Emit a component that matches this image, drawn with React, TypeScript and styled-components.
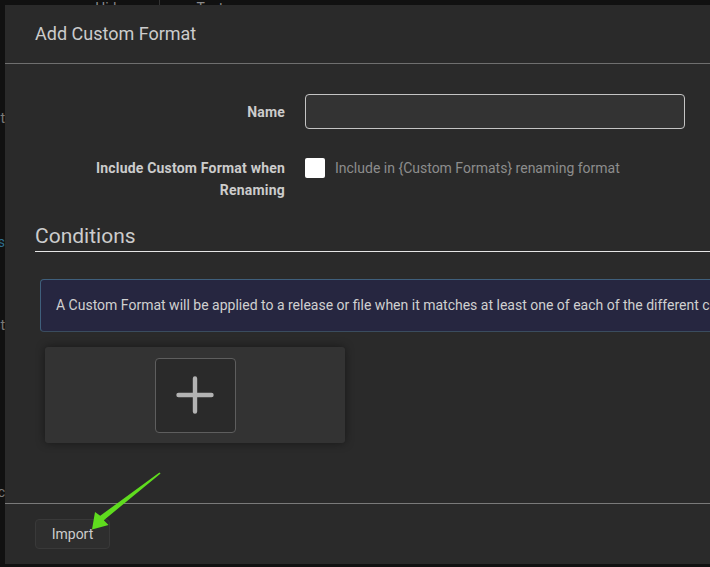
import React from "react";
import styled, { createGlobalStyle } from "styled-components";

const Global = createGlobalStyle`
  html, body { margin: 0; padding: 0; background: #111111; overflow: hidden; }
  body { font-family: Roboto, "Liberation Sans", sans-serif; }
  * { box-sizing: border-box; }
`;

const Page = styled.div`
  position: relative;
  width: 710px;
  height: 567px;
  overflow: hidden;
  background: #111111;
`;

const TopStrip = styled.div`
  display: flex;
  height: 5px;
  overflow: hidden;
  padding-left: 60px;
`;

const TopCell = styled.div<{ $divider?: boolean }>`
  width: 100px;
  height: 5px;
  overflow: hidden;
  display: flex;
  justify-content: center;
  align-items: flex-end;
  border-right: ${(p) => (p.$divider ? "1px solid #333" : "none")};
  color: #8a8a8a;
  font-size: 14px;
  line-height: 14px;
`;

const TopText = styled.span`
  display: block;
  transform: translateY(10px);
`;

const SideCol = styled.div`
  display: flex;
  flex-direction: column;
  width: 5px;
  overflow: hidden;
  align-items: flex-end;
`;

const SideText = styled.div<{ $top: number; $blue?: boolean }>`
  margin-top: ${(p) => p.$top}px;
  white-space: nowrap;
  font-size: 14px;
  line-height: 16px;
  color: ${(p) => (p.$blue ? "#2f6f8f" : "#7a7a7a")};
`;

const Modal = styled.div`
  position: absolute;
  left: 5px;
  top: 5px;
  width: 780px;
  height: 559px;
  background: #2a2a2a;
  display: flex;
  flex-direction: column;
`;

const Header = styled.div`
  padding: 15px 30px;
  font-size: 18px;
  line-height: 28px;
  color: #cccccc;
  border-bottom: 1px solid #6f6f6f;
`;

const Body = styled.div`
  flex: 1;
  padding: 30px 30px 0 30px;
`;

const FormRow = styled.div<{ $mb: number; $center?: boolean }>`
  display: flex;
  align-items: ${(p) => (p.$center ? "center" : "flex-start")};
  margin-bottom: ${(p) => p.$mb}px;
`;

const Label = styled.div`
  width: 270px;
  padding-right: 20px;
  text-align: right;
  font-weight: 700;
  font-size: 14px;
  letter-spacing: 0.2px;
  line-height: 22px;
  color: #cccccc;
`;

const TextInput = styled.div`
  width: 380px;
  height: 35px;
  border: 1px solid #c4c4c4;
  border-radius: 4px;
  background: #333333;
`;

const CheckRow = styled.div`
  display: flex;
  align-items: center;
  gap: 10px;
  height: 22px;
`;

const Checkbox = styled.div`
  width: 20px;
  height: 20px;
  border-radius: 2px;
  background: #ffffff;
`;

const HelpText = styled.span`
  font-size: 14px;
  color: #8d8d8d;
`;

const SectionTitle = styled.div`
  font-size: 21px;
  line-height: 30px;
  color: #cccccc;
  border-bottom: 1px solid #e6e6e6;
  margin-right: -60px;
`;

const InfoBox = styled.div`
  margin: 27px -60px 15px 5px;
  padding: 15px 15px;
  background: #262640;
  border: 1px solid #3f5f7c;
  border-bottom-color: #3a4c5e;
  border-radius: 4px;
  font-size: 14px;
  line-height: 21px;
  color: #d0d0d0;
  white-space: nowrap;
  overflow: hidden;
`;

const CardList = styled.div`
  display: flex;
  padding-left: 10px;
`;

const AddCard = styled.div`
  width: 300px;
  height: 96px;
  background: #333333;
  border-radius: 3px;
  box-shadow: 0 0 10px rgba(0, 0, 0, 0.45);
  display: flex;
  justify-content: center;
  align-items: center;
`;

const AddButton = styled.div`
  width: 81px;
  height: 75px;
  border: 1px solid #5e5e5e;
  border-radius: 4px;
  background: #2a2a2a;
  display: flex;
  justify-content: center;
  align-items: center;
`;

const Footer = styled.div`
  border-top: 1px solid #7a7a7a;
  padding: 15px 30px;
  display: flex;
`;

const Button = styled.div`
  width: 75px;
  height: 30px;
  border: 1px solid #393939;
  border-radius: 4px;
  background: #2e2e2e;
  color: #cccccc;
  font-size: 14px;
  display: flex;
  justify-content: center;
  align-items: center;
`;

const ArrowSvg = styled.svg`
  position: absolute;
  left: 0;
  top: 0;
  pointer-events: none;
`;

export default function App() {
  return (
    <Page>
      <Global />
      <TopStrip>
        <TopCell $divider>
          <TopText>Hide</TopText>
        </TopCell>
        <TopCell>
          <TopText>Test</TopText>
        </TopCell>
      </TopStrip>
      <SideCol>
        <SideText $top={105}>Format</SideText>
        <SideText $top={108} $blue>Formats</SideText>
        <SideText $top={67}>Test</SideText>
        <SideText $top={151}>Sc</SideText>
      </SideCol>

      <Modal>
        <Header>Add Custom Format</Header>
        <Body>
          <FormRow $mb={28} $center>
            <Label>Name</Label>
            <TextInput />
          </FormRow>
          <FormRow $mb={20}>
            <Label>Include Custom Format when Renaming</Label>
            <CheckRow>
              <Checkbox />
              <HelpText>Include in {"{Custom Formats}"} renaming format</HelpText>
            </CheckRow>
          </FormRow>
          <SectionTitle>Conditions</SectionTitle>
          <InfoBox>
            A Custom Format will be applied to a release or file when it matches at least one of each of the different condition types chosen.
          </InfoBox>
          <CardList>
            <AddCard>
              <AddButton>
                <svg width="38" height="38" viewBox="0 0 38 38">
                  <path
                    d="M19 2.5 V35.5 M2.5 19 H35.5"
                    stroke="#b3b3b3"
                    strokeWidth="4.4"
                    strokeLinecap="round"
                  />
                </svg>
              </AddButton>
            </AddCard>
          </CardList>
        </Body>
        <Footer>
          <Button>Import</Button>
        </Footer>
      </Modal>

      <ArrowSvg width="710" height="567" viewBox="0 0 710 567">
        <polygon
          points="160.6,473.6 103.8,520.2 108.5,525 92,529.5 95,512 100.2,515.8 159.4,472.4"
          fill="#5fdc1e"
        />
      </ArrowSvg>
    </Page>
  );
}
